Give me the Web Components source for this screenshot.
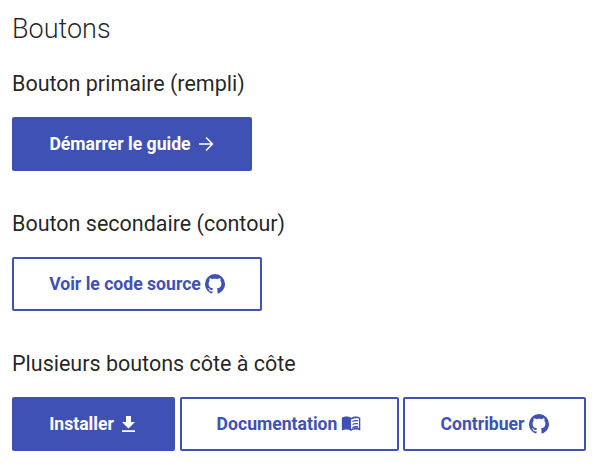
<!DOCTYPE html>
<html lang="fr">
<head>
<meta charset="utf-8">
<title>Boutons</title>
<style>
    html, body { margin: 0; background: #fff; }
    body { font-family: Roboto, sans-serif; color: rgba(0, 0, 0, .87); }
</style>
</head>
<body>
<template id="page-template">
    <style>
        :host {
            display: block;
            padding: 13px 12px 0;
        }
        ::slotted(h1) {
            margin: 0 0 24px;
            font-size: 27px;
            line-height: 32px;
            font-weight: 300;
            color: rgba(0, 0, 0, .87);
        }
    </style>
    <slot></slot>
</template>

<template id="section-template">
    <style>
        :host {
            display: block;
            margin-bottom: 38px;
        }
        #title {
            font-size: 21.5px;
            line-height: 30px;
            font-weight: 400;
            margin-bottom: 18px;
        }
        #row {
            display: flex;
            gap: 4.5px;
        }
    </style>
    <div id="title"></div>
    <div id="row"><slot></slot></div>
</template>

<template id="button-template">
    <style>
        :host {
            display: inline-flex;
            box-sizing: border-box;
            height: 54px;
            padding-left: 2px;
            align-items: center;
            justify-content: center;
            gap: 2px;
            border: 2px solid #4051b5;
            border-radius: 2px;
            color: #4051b5;
            font-size: 17.6px;
            font-weight: 700;
        }
        :host([primary]) {
            background: #4051b5;
            color: #fff;
        }
        svg {
            display: block;
            width: 24px;
            height: 24px;
            fill: currentColor;
        }
        svg.line {
            fill: none;
            stroke: currentColor;
            stroke-width: 1.5;
        }
    </style>
    <slot></slot>
    <span id="icon"></span>
</template>

<script>
const ICONS = {
    arrow: '<svg class="line" viewBox="0 0 24 24"><path d="M6 12h13.500M13 5.500l6.500 6.500-6.500 6.500"/></svg>',
    download: '<svg viewBox="0 0 24 24"><path d="M6 20h13v-1.800H6M19 10h-4V4h-5v6H6l6.500 6.500L19 10Z"/></svg>',
    book: '<svg viewBox="0 0 24 24"><path transform="translate(1.500 0) scale(.88)" fill-rule="evenodd" d="M12 21.500C10.650 20.450 8.200 20 6.500 20 4.850 20 3.100 20.300 1.500 21.100V6.500C3 5.400 5 5 6.500 5c2 0 4.150.4 5.500 1.500 1.350-1.100 3.500-1.500 5.500-1.500 1.500 0 3.500.4 5 1.500v14.600c-1.600-.8-3.350-1.100-5-1.100-1.700 0-4.150.45-5.500 1.500Zm0-2c1.350-.85 3.800-1.500 5.500-1.500 1.200 0 2.400.15 3.500.5V7.500C19.900 7.150 18.700 7 17.500 7c-1.700 0-4.150.65-5.500 1.500v11Zm1.500-9.500c1.100-.7 2.500-1 4-1 .9 0 1.750.1 2.500.3v1.500c-.75-.2-1.600-.3-2.500-.3-1.500 0-2.900.3-4 .9V10Zm0 3.500c1.100-.7 2.500-1 4-1 .9 0 1.750.1 2.500.3v1.500c-.75-.2-1.600-.3-2.500-.3-1.500 0-2.900.3-4 .9v-1.400Zm0 3.500c1.100-.7 2.500-1 4-1 .9 0 1.750.1 2.500.3v1.500c-.75-.2-1.600-.3-2.500-.3-1.500 0-2.900.3-4 .9V17Z"/></svg>',
    github: '<svg viewBox="0 0 24 24"><path d="M12 2A10 10 0 0 0 2 12c0 4.420 2.870 8.170 6.840 9.500.5.080.66-.23.66-.5v-1.690c-2.770.6-3.360-1.340-3.360-1.340-.46-1.160-1.110-1.470-1.110-1.470-.91-.62.07-.6.07-.6 1 .07 1.530 1.030 1.530 1.030.87 1.520 2.340 1.070 2.910.83.090-.65.350-1.090.630-1.340-2.220-.25-4.550-1.110-4.550-4.920 0-1.110.380-2 1.030-2.710-.1-.25-.450-1.290.1-2.640 0 0 .840-.27 2.750 1.020.790-.22 1.650-.33 2.500-.33s1.710.110 2.500.330c1.910-1.290 2.750-1.020 2.750-1.020.550 1.350.2 2.390.1 2.640.650.710 1.030 1.600 1.030 2.710 0 3.820-2.340 4.660-4.570 4.910.360.310.690.920.690 1.850V21c0 .270.160.590.670.5C19.140 20.160 22 16.420 22 12A10 10 0 0 0 12 2Z"/></svg>'
}

function shadowFrom(el, id) {
    el.attachShadow({ mode: 'open' })
    el.shadowRoot.appendChild(document.getElementById(id).content.cloneNode(true))
}

class DocPage extends HTMLElement {
    constructor() {
        super()
        shadowFrom(this, 'page-template')
    }
}

class DocSection extends HTMLElement {
    constructor() {
        super()
        shadowFrom(this, 'section-template')
    }

    connectedCallback() {
        this.shadowRoot.querySelector('#title').textContent = this.getAttribute('label')
    }
}

class DocButton extends HTMLElement {
    constructor() {
        super()
        shadowFrom(this, 'button-template')
    }

    connectedCallback() {
        this.style.width = this.getAttribute('w') + 'px'
        this.shadowRoot.querySelector('#icon').innerHTML = ICONS[this.getAttribute('icon')]
    }
}

customElements.define('doc-page', DocPage)
customElements.define('doc-section', DocSection)
customElements.define('doc-button', DocButton)
</script>

<doc-page>
    <h1>Boutons</h1>
    <doc-section label="Bouton primaire (rempli)">
        <doc-button primary w="240" icon="arrow">Démarrer le guide</doc-button>
    </doc-section>
    <doc-section label="Bouton secondaire (contour)">
        <doc-button w="250" icon="github">Voir le code source</doc-button>
    </doc-section>
    <doc-section label="Plusieurs boutons côte à côte">
        <doc-button primary w="163" icon="download">Installer</doc-button>
        <doc-button w="219" icon="book">Documentation</doc-button>
        <doc-button w="183" icon="github">Contribuer</doc-button>
    </doc-section>
</doc-page>
</body>
</html>
